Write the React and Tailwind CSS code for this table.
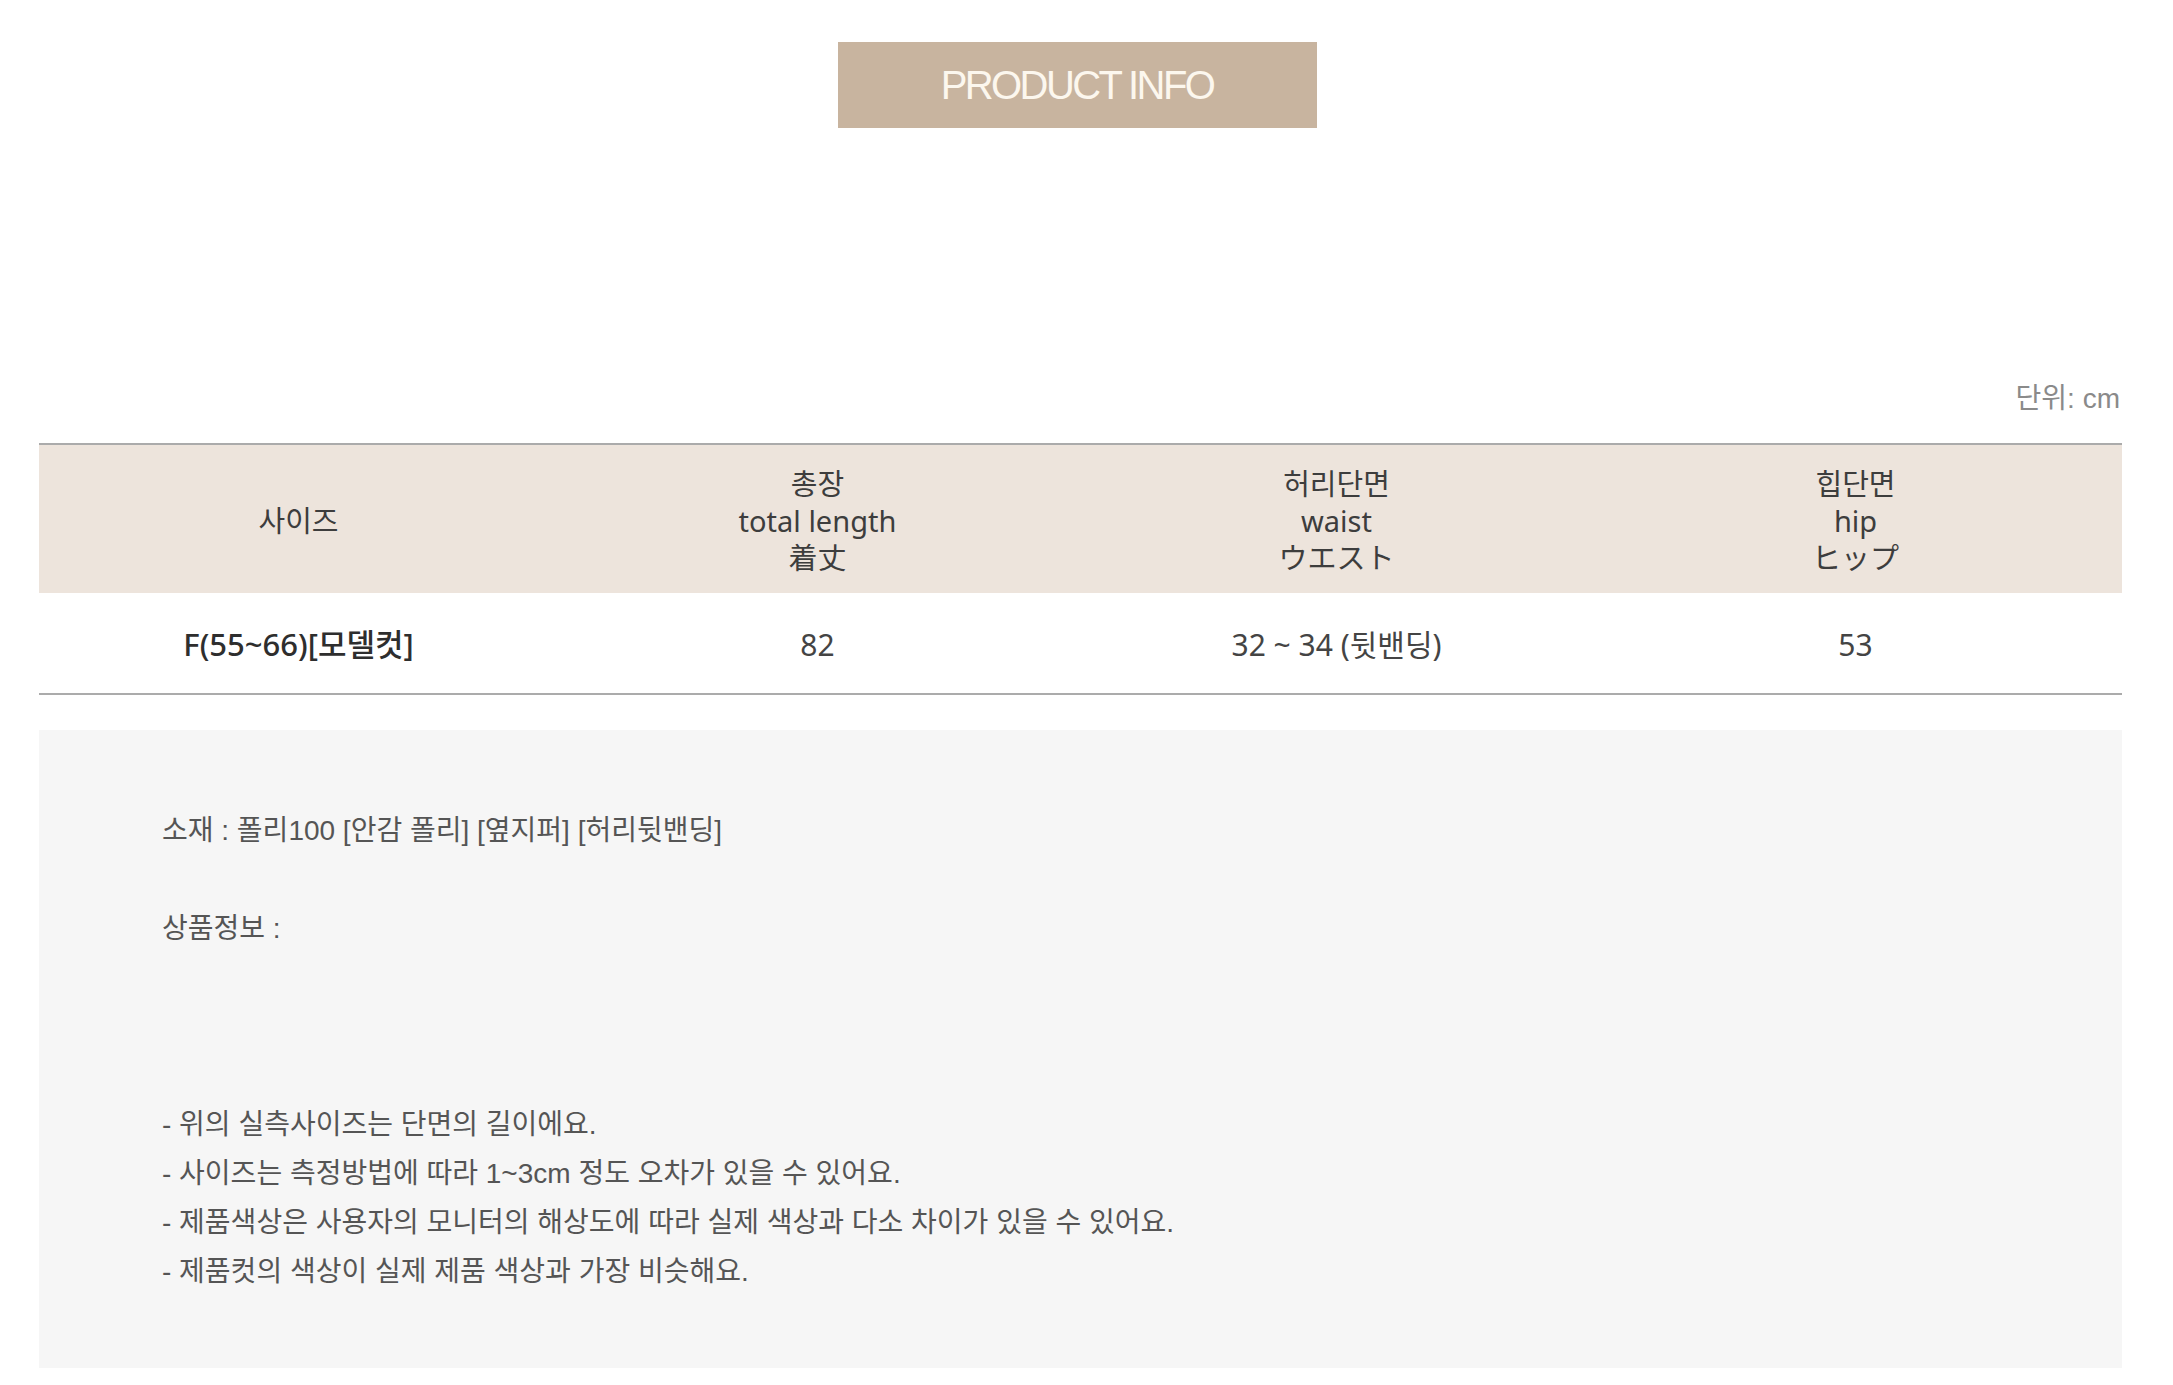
export default function App() {
  const kr = { fontFamily: '"Noto Sans", "Noto Sans CJK KR", sans-serif' };
  const info = { fontFamily: '"Liberation Sans", "Noto Sans CJK KR", sans-serif' };
  const cols = [
    { lines: ["사이즈"], value: "F(55~66)[모델컷]", strong: true },
    { lines: ["총장", "total length", "着丈"], value: "82" },
    { lines: ["허리단면", "waist", "ウエスト"], value: "32 ~ 34 (뒷밴딩)" },
    { lines: ["힙단면", "hip", "ヒップ"], value: "53" },
  ];
  return (
    <div className="w-[2173px] min-h-[1385px] bg-white">
      <div className="w-[2083px] ml-[39px] pt-[42px]">
        <div className="flex justify-center">
          <div
            className="w-[479px] h-[86px] bg-[#c8b49f] flex items-center justify-center text-[40px] text-[#fcf7ee] tracking-[-2.6px] mr-[7px]"
            style={{ fontFamily: '"Liberation Sans", sans-serif' }}
          >
            PRODUCT INFO
          </div>
        </div>

        <div className="mt-[255px] flex justify-end pr-[2px] text-[28px] leading-[32px] text-[#8a8a8a]" style={info}>
          단위: cm
        </div>

        <div className="mt-[28px] border-t-2 border-b-2 border-[#ababab]" style={kr}>
          <div className="grid grid-cols-[519px_519px_519px_1fr] bg-[#ede4dc] h-[148px] pt-[2px]">
            {cols.map((c, i) => (
              <div key={i} className={i === 3 ? "flex flex-col items-center justify-center text-[29px] leading-[37px] text-[#3d3d3d] mr-[7px]" : "flex flex-col items-center justify-center text-[29px] leading-[37px] text-[#3d3d3d]"}>
                {c.lines.map((l, j) => (
                  <div key={j}>{l}</div>
                ))}
              </div>
            ))}
          </div>
          <div className="grid grid-cols-[519px_519px_519px_1fr] h-[100px] pt-[2px]">
            {cols.map((c, i) => (
              <div
                key={i}
                className={
                  c.strong
                    ? "flex items-center justify-center text-[31px] text-[#2e2e2e] font-medium"
                    : i === 3
                    ? "flex items-center justify-center text-[30px] text-[#444444] mr-[7px]"
                    : "flex items-center justify-center text-[30px] text-[#444444]"
                }
              >
                {c.value}
              </div>
            ))}
          </div>
        </div>

        <div className="mt-[35px] h-[638px] bg-[#f6f6f6] pl-[123px] pt-[76px] text-[28px] leading-[49px] text-[#555555]" style={info}>
          <div>소재 : 폴리100 [안감 폴리] [옆지퍼] [허리뒷밴딩]</div>
          <div className="h-[49px]"></div>
          <div>상품정보 :</div>
          <div className="h-[147px]"></div>
          <div>- 위의 실측사이즈는 단면의 길이에요.</div>
          <div>- 사이즈는 측정방법에 따라 1~3cm 정도 오차가 있을 수 있어요.</div>
          <div>- 제품색상은 사용자의 모니터의 해상도에 따라 실제 색상과 다소 차이가 있을 수 있어요.</div>
          <div>- 제품컷의 색상이 실제 제품 색상과 가장 비슷해요.</div>
        </div>
      </div>
    </div>
  );
}
